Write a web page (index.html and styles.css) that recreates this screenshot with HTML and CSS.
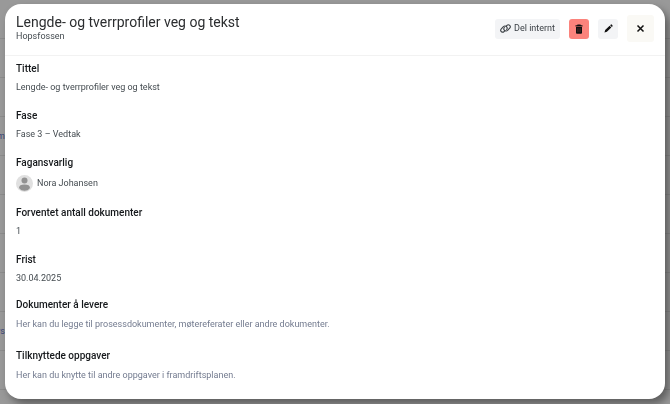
FILE: index.html
```html
<!DOCTYPE html>
<html lang="nb">
<head>
<meta charset="UTF-8" />
<meta name="viewport" content="width=device-width, initial-scale=1" />
<title>Lengde- og tverrprofiler veg og tekst</title>
<link rel="stylesheet" href="styles.css">
</head>
<body>
  <div class="page" aria-hidden="true">
    <div class="row"></div>
    <div class="row"></div>
    <div class="row"></div>
    <div class="row"><span>m</span></div>
    <div class="row"></div>
    <div class="row"></div>
    <div class="row"></div>
    <div class="row"></div>
    <div class="row"><span>rs</span></div>
    <div class="row"></div>
  </div>

  <div class="backdrop">
    <section class="modal" role="dialog" aria-modal="true" aria-labelledby="modal-title">
      <header class="modal-header">
        <div class="heading">
          <h1 id="modal-title">Lengde- og tverrprofiler veg og tekst</h1>
          <p>Hopsfossen</p>
        </div>
        <div class="actions">
          <button type="button" class="btn share">
            <svg width="11" height="9" viewBox="0 0 20 16" fill="none" stroke="currentColor" stroke-width="2" stroke-linecap="round">
              <path d="M11.8 4.6a3.8 3.8 0 0 0-5.6.2L2.4 8.6a3.5 3.5 0 0 0 5 5l1.2-1.2" />
              <path d="M8.2 11.4a3.8 3.8 0 0 0 5.6-.2l3.8-3.8a3.5 3.5 0 0 0-5-5l-1.2 1.2" />
              <path d="M11.8 4.6a3.8 3.8 0 0 1 .3 5.2M8.2 11.4a3.8 3.8 0 0 1-.3-5.2" />
            </svg>
            Del internt
          </button>
          <button type="button" class="btn icon delete" aria-label="Slett">
            <svg width="8" height="10" viewBox="0 0 16 20" fill="currentColor">
              <path d="M5 1.2h6l.8 1.3H15v2.3H1V2.5h3.2zM2 6h12v11.5a1.8 1.8 0 0 1-1.8 1.8H3.8A1.800 1.800 0 0 1 2 17.5z" />
              <path d="M5.3 8.500v8M8 8.500v8M10.700 8.500v8" stroke="#a8504b" stroke-width=".6" />
            </svg>
          </button>
          <button type="button" class="btn icon" aria-label="Rediger">
            <svg width="9" height="9" viewBox="0 0 20 20" fill="currentColor">
              <path d="M13.6 2.7l1.200-1.200a2 2 0 0 1 2.800 0l1 1a2 2 0 0 1 0 2.800l-1.200 1.200zM12.500 3.800l3.800 3.800L6.500 17.400 1 19l1.600-5.400z" />
            </svg>
          </button>
          <button type="button" class="btn close" aria-label="Lukk">
            <svg width="9" height="9" viewBox="0 0 18 18" fill="none" stroke="currentColor" stroke-width="3">
              <path d="M3 3l12 12M15 3L3 15" />
            </svg>
          </button>
        </div>
      </header>

      <div class="modal-body">
        <dl class="fields">
          <div class="field">
            <dt>Tittel</dt>
            <dd>Lengde- og tverrprofiler veg og tekst</dd>
          </div>
          <div class="field">
            <dt>Fase</dt>
            <dd>Fase 3 – Vedtak</dd>
          </div>
          <div class="field">
            <dt>Fagansvarlig</dt>
            <dd class="person">
              <svg width="17" height="17" viewBox="0 0 34 34">
                <circle cx="17" cy="17" r="17" fill="#e0e0e0" />
                <circle cx="17" cy="11" r="6" fill="#929292" />
                <path d="M6 26c0-5 4-7 11-7s11 2 11 7c-3 4-6.500 5.500-11 5.500S9 30 6 26z" fill="#929292" />
              </svg>
              Nora Johansen
            </dd>
          </div>
          <div class="field">
            <dt>Forventet antall dokumenter</dt>
            <dd>1</dd>
          </div>
          <div class="field">
            <dt>Frist</dt>
            <dd>30.04.2025</dd>
          </div>
        </dl>

        <section class="related">
          <h2>Dokumenter å levere</h2>
          <p>Her kan du legge til prosessdokumenter, møtereferater eller andre dokumenter.</p>
        </section>
        <section class="related">
          <h2>Tilknyttede oppgaver</h2>
          <p>Her kan du knytte til andre oppgaver i framdriftsplanen.</p>
        </section>
      </div>
    </section>
  </div>
</body>
</html>
```

FILE: styles.css
```css
* {
  box-sizing: border-box;
}
body {
  margin: 0;
  height: 100vh;
  overflow: hidden;
  background: #999;
  color: #444b50;
  font-family: Roboto, "Liberation Sans", sans-serif;
  font-size: 9px;
  line-height: 15px;
}
h1, h2, p, dl, dd {
  margin: 0;
}

/* list behind the dialog */
.row {
  display: flex;
  align-items: center;
  height: 39px;
  border-bottom: 1px solid #8c8c8c;
}
.row span {
  width: 5px;
  display: flex;
  justify-content: flex-end;
  color: #3c4678;
}

.backdrop {
  position: fixed;
  inset: 0;
  display: grid;
  padding: 4px 5px 5px;
}
.modal {
  min-width: 0;
  background: #fff;
  border-radius: 16px;
  box-shadow: 4px 5px 8px rgba(0, 0, 0, 0.4);
}
.modal-header {
  display: flex;
  justify-content: space-between;
  align-items: center;
  padding: 11px 11px 13px;
  border-bottom: 1px solid #f2f2f2;
}
.heading h1 {
  font-size: 14px;
  font-weight: 400;
  line-height: 15px;
  color: #2b2d2f;
}
.heading p {
  line-height: 12px;
}

.actions {
  display: flex;
  align-items: center;
  gap: 9px;
}
.btn {
  display: flex;
  align-items: center;
  justify-content: center;
  gap: 3px;
  height: 20px;
  padding: 0 5px;
  border: none;
  border-radius: 3px;
  background: #f3f4f6;
  color: #111;
  font: inherit;
  cursor: pointer;
}
.btn.share {
  color: #3c4146;
}
.btn.icon {
  width: 20px;
  padding: 0;
}
.btn.delete {
  background: #fb837c;
}
.btn.close {
  width: 27px;
  height: 27px;
  padding: 0;
  background: #faf9f5;
}

.modal-body {
  padding: 5px 11px;
}
.fields {
  display: grid;
  gap: 13px;
  margin-bottom: 11px;
}
.field dt,
.related h2 {
  margin-bottom: 4px;
  font-size: 10px;
  font-weight: 500;
  color: #15181b;
}
.person {
  display: flex;
  align-items: center;
  gap: 4px;
  line-height: 18px;
}
.related + .related {
  margin-top: 16px;
}
.related h2 {
  margin-bottom: 5px;
}
.related p {
  color: #737b8f;
}
```
